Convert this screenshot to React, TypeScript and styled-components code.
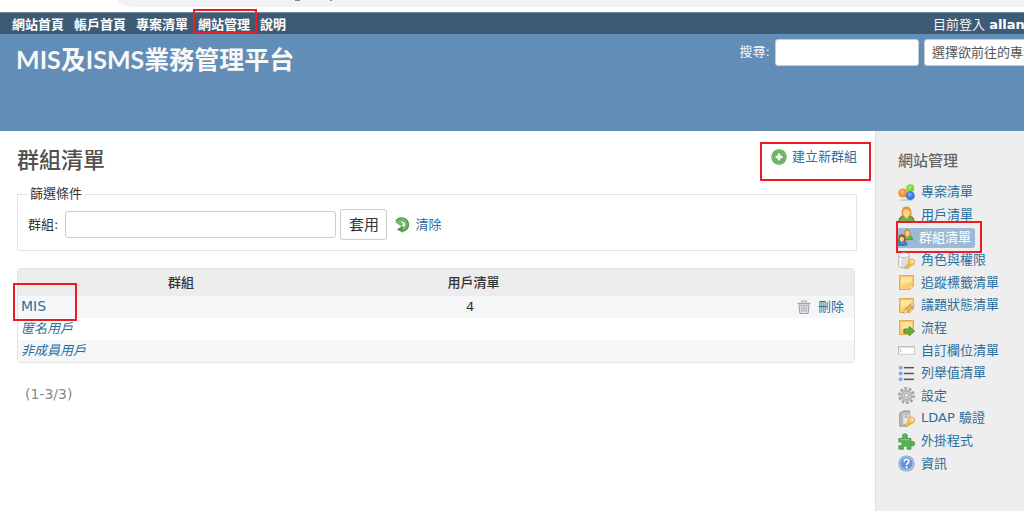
import React from 'react';
import styled, { createGlobalStyle, css } from 'styled-components';

const GlobalStyle = createGlobalStyle`
  * { box-sizing: border-box; }
  body {
    margin: 0;
    background: #fff;
    color: #333;
    font-family: "DejaVu Sans", "Noto Sans CJK TC", sans-serif;
    font-size: 13px;
    line-height: 20px;
  }
  a { color: #2a6f9f; text-decoration: none; }
`;

const Page = styled.div`
  display: flex;
  flex-direction: column;
  min-height: 100vh;
  overflow: hidden;
`;

const BrowserStrip = styled.div`
  height: 12px;
  padding-left: 118px;
  background: #fff;
`;

const AddressBar = styled.div`
  display: flex;
  gap: 30px;
  height: 7px;
  padding-left: 177px;
  border-bottom-left-radius: 16px 7px;
  background: #f1f3f4;
`;

const UrlTail = styled.span<{ $width: number }>`
  width: ${p => p.$width}px;
  height: 1px;
  background: #85888c;
`;

const Mark = styled.span<{ $inset: string }>`
  position: absolute;
  inset: ${p => p.$inset};
  border: 2px solid #ec1c24;
  pointer-events: none;
`;

const NameMark = styled(Mark)`
  width: 64px;
`;

const TopMenu = styled.nav`
  display: flex;
  justify-content: space-between;
  height: 22px;
  padding-left: 12px;
  border-top: 1px solid #748796;
  background: #3e5b76;
  color: #f4f6f8;
  line-height: 24px;
`;

const MenuList = styled.ul`
  display: flex;
  gap: 10px;
  margin: 0;
  padding: 0;
  list-style: none;
`;

const MenuItem = styled.li`
  position: relative;
  a { color: #fff; font-weight: 700; }
`;

const LoggedAs = styled.div`
  flex: none;
  width: 91px;
  white-space: nowrap;
  a { color: #fff; font-weight: 700; }
`;

const Header = styled.header`
  display: flex;
  justify-content: space-between;
  height: 97px;
  padding: 5px 0 0 16px;
  background: #628db6;
  color: #f8f8f8;
`;

const SiteTitle = styled.h1`
  margin: 0;
  font-family: Lato, "Noto Sans CJK TC", sans-serif;
  font-size: 25px;
  font-weight: 700;
  line-height: 40px;
`;

const QuickSearch = styled.form`
  display: flex;
  flex: none;
  gap: 5px;
  height: 27px;
  margin-right: -60px;
  line-height: 26px;
`;

const fieldBox = css`
  height: 27px;
  border: 1px solid #ccc;
  border-radius: 3px;
  background: #fff;
  color: #555;
  font: inherit;
`;

const TextField = styled.input<{ $width: number }>`
  ${fieldBox}
  width: ${p => p.$width}px;
  padding: 0 6px;
`;

const ProjectSelect = styled.select`
  ${fieldBox}
  width: 160px;
  padding: 0 7px;
  appearance: none;
`;

const Main = styled.div`
  display: flex;
  flex: 1;
`;

const Content = styled.main`
  flex: 1;
  min-width: 0;
  padding: 12px 18px 20px 17px;
`;

const TitleRow = styled.div`
  display: flex;
  justify-content: space-between;
  align-items: flex-start;
`;

const PageTitle = styled.h2`
  margin: 0;
  color: #505050;
  font-size: 22px;
  font-weight: 500;
  line-height: 36px;
`;

const IconLink = styled.a<{ $gap?: number }>`
  display: inline-flex;
  align-items: center;
  gap: ${p => p.$gap ?? 5}px;
  line-height: 20px;
  vertical-align: top;
  svg { flex: none; }
`;

const Contextual = styled.div`
  position: relative;
  padding-top: 4px;
`;

const Filters = styled.fieldset`
  min-width: 0;
  margin: 5px 0 17px;
  padding: 5px 10px 10px;
  border: 1px solid #e4e4e4;
`;

const Legend = styled.legend`
  padding: 0 2px;
`;

const FilterRow = styled.div`
  display: flex;
  align-items: center;
  gap: 4px;
  label { margin-right: 3px; }
`;

const ApplyButton = styled.button`
  width: 47px;
  height: 31px;
  padding: 0;
  border: 1px solid #ccc;
  border-radius: 3px;
  background: #fff;
  color: #333;
  font: inherit;
  font-size: 15px;
`;

const ClearLink = styled(IconLink)`
  margin-left: 3px;
`;

const TableFrame = styled.div`
  margin-right: 2px;
  border: 1px solid #e4e4e4;
  border-radius: 3px;
`;

const GroupTable = styled.table`
  width: 100%;
  border-collapse: collapse;
  table-layout: fixed;
`;

const HeadCell = styled.th<{ $share: number }>`
  width: ${p => p.$share}%;
  height: 27px;
  padding: 0;
  background: #ececec;
  font-weight: 500;
`;

const Row = styled.tr`
  &:nth-child(odd) { background: #f5f6f8; }
`;

const Cell = styled.td<{ $align?: string }>`
  position: relative;
  height: 22px;
  padding: 0 10px 0 3px;
  line-height: 20px;
  text-align: ${p => p.$align ?? 'left'};
`;

const NameLink = styled.a<{ $builtin?: boolean }>`
  font-size: ${p => (p.$builtin ? 13 : 14)}px;
  font-style: ${p => (p.$builtin ? 'italic' : 'normal')};
  line-height: 16px;
`;

const Pagination = styled.p`
  margin: 21px 8px 0;
  color: #888;
  font-size: 14px;
`;

const Sidebar = styled.aside`
  flex: none;
  width: 149px;
  padding: 18px 0 20px 22px;
  border-left: 1px solid #ddd;
  background: #eee;
`;

const SideTitle = styled.h3`
  margin: 0 0 8px;
  color: #666;
  font-size: 15px;
  font-weight: 500;
  line-height: 24px;
`;

const SideList = styled.ul`
  display: flex;
  flex-direction: column;
  height: 294px;
  margin: 0;
  padding: 0;
  list-style: none;
`;

const SideItem = styled.li`
  position: relative;
  display: flex;
  flex: 1;
  align-items: center;
  white-space: nowrap;
`;

const SideLink = styled(IconLink)<{ $selected?: boolean }>`
  gap: 6px;
  svg { width: 17px; height: 17px; }
  ${p => p.$selected && css`
    margin-left: -2px;
    padding-right: 4px;
    border-radius: 3px;
    background: #9db9d5;
    color: #fff;
  `}
`;

const Svg = ({ children, size = 16 }: { children: React.ReactNode; size?: number }) => (
  <svg width={size} height={size} viewBox="0 0 16 16" aria-hidden="true">{children}</svg>
);

const AddIcon = () => (
  <Svg>
    <circle cx="8" cy="8" r="7.700" fill="#4c9a48" />
    <circle cx="8" cy="8" r="6.600" fill="#69b35f" stroke="#94c98b" strokeWidth=".8" />
    <path d="M8 4.500v7M4.500 8h7" stroke="#fff" strokeWidth="2.400" />
  </Svg>
);

const ReloadIcon = () => (
  <Svg>
    <path d="M3 4.800C5.500 1.500 10 1.700 12 4.200c2.500 3.300.7 7.800-3.500 8.600" fill="none" stroke="#4f9b4b" strokeWidth="4" />
    <path d="M9 8.500v7.300L2.800 12.600z" fill="#4f9b4b" />
    <path d="M3.300 5.200C5.500 2.200 9.500 2.200 11.500 4.500c2.200 2.900.6 7-3.200 7.700" fill="none" stroke="#74b96c" strokeWidth="2.600" />
    <path d="M1 5.200l3.200-2 5.300 3.600L7.500 9.500z" fill="#74b96c" />
  </Svg>
);

const TrashIcon = () => (
  <Svg size={14}>
    <path d="M5.500 3V1.200h5V3" fill="none" stroke="#a3a3a8" strokeWidth="1.200" />
    <path d="M.8 3.200h14.400v1.600H.8z" fill="#a3a3a8" />
    <path d="M2.300 6h11.400l-.8 8.200q-.1 1.200-1.300 1.200H4.400q-1.200 0-1.300-1.200z" fill="#e4e4e8" stroke="#a3a3a8" strokeWidth="1.300" />
    <path d="M5.500 7.500v6M8 7.500v6M10.500 7.500v6" stroke="#a3a3a8" strokeWidth="1.200" />
  </Svg>
);

const ProjectsIcon = () => (
  <Svg>
    <ellipse cx="8" cy="15" rx="7" ry="1" fill="#cfcfcf" />
    <circle cx="11.500" cy="4" r="3.800" fill="#7fd43c" />
    <circle cx="10.900" cy="3.400" r="2" fill="#a3e665" />
    <circle cx="4.500" cy="8.500" r="4.300" fill="#f0932f" />
    <circle cx="4" cy="7.600" r="2.300" fill="#fbae5c" />
    <circle cx="11.600" cy="11" r="4.200" fill="#3c7be0" />
    <circle cx="11" cy="10" r="2" fill="#6ea3f2" />
  </Svg>
);

const Person = ({ shirt, edge, hair }: { shirt: string; edge: string; hair: string }) => (
  <>
    <path d="M.8 14.800C.8 10.800 2.800 9.300 8 9.300s7.200 1.500 7.200 5.500q-7.200 1.700-14.400 0z" fill={shirt} stroke={edge} />
    <path d="M5.500 9.300L8 11.500l2.500-2.200z" fill="#ffe3bd" />
    <path d="M3.400 9.500C3 3 4.300.4 8 .4s5 2.600 4.600 9.100l-2 .3H5.400z" fill={hair} />
    <ellipse cx="8" cy="6.500" rx="3.100" ry="3.500" fill="#ffd08a" />
  </>
);

const UserIcon = () => (
  <Svg><Person shirt="#6fb14f" edge="#458b31" hair="#e39a2c" /></Svg>
);

const GroupIcon = () => (
  <Svg>
    <g transform="translate(5.500 0) scale(.66)"><Person shirt="#6fb14f" edge="#458b31" hair="#d98b26" /></g>
    <g transform="translate(0 5) scale(.68)"><Person shirt="#4384cf" edge="#2860a5" hair="#8d4f2d" /></g>
  </Svg>
);

const Key = () => (
  <>
    <path d="M10.800 9.600L6.800 13.600v1.900h2.500v-1.200h1.800l1.900-2z" fill="#f4bb45" stroke="#cd9430" strokeWidth=".5" />
    <circle cx="12.600" cy="9.600" r="3.100" fill="#f8c95c" stroke="#cd9430" strokeWidth=".5" />
    <circle cx="13.400" cy="8.800" r=".9" fill="#fff" />
  </>
);

const RolesIcon = () => (
  <Svg>
    <path d="M.6 3v9.800c0 3 10 3 10 0V3z" fill="#dedede" stroke="#aaa" strokeWidth=".7" />
    <path d="M2.200 4.500v9" stroke="#fff" strokeWidth="1.500" />
    <ellipse cx="5.600" cy="3" rx="5" ry="2.200" fill="#f6f6f6" stroke="#b0b0b0" strokeWidth=".7" />
    <Key />
  </Svg>
);

const Note = () => (
  <>
    <path d="M1.500 1.500h13v9.500L11 14.500H1.500z" fill="#fbcf70" stroke="#e8a850" />
    <path d="M3 3h10v4L3 10z" fill="#fde6a0" />
    <path d="M14.500 11H11v3.500z" fill="#fff5cc" stroke="#e8a850" strokeWidth=".7" />
  </>
);

const TrackerIcon = () => <Svg><Note /></Svg>;

const StatusIcon = () => (
  <Svg>
    <Note />
    <path d="M5.500 15.300l1-3.500L13 5.500l2.500 2.300-6.500 6.500z" fill="#f4b450" stroke="#b0793b" strokeWidth=".7" />
    <path d="M5.500 15.300l1-3.500 2.500 2.500z" fill="#f6dfbf" />
    <path d="M12 6.400l1.300-1.200 2.300 2.300-1.300 1.200z" fill="#d3cdd0" />
  </Svg>
);

const WorkflowIcon = () => (
  <Svg>
    <Note />
    <path d="M5.500 9.500h5V7l5.200 4.500-5.200 4.300v-2.500h-5z" fill="#5fb145" stroke="#3f933a" strokeWidth=".8" />
  </Svg>
);

const FieldIcon = () => (
  <Svg>
    <path d="M.5 4.500h15v7H.5z" fill="#fff" stroke="#ccc" />
    <path d="M.5 11.500v-7h15" fill="none" stroke="#b5b5b5" />
    <path d="M2.500 6.500v3" stroke="#aaa" strokeWidth=".8" />
  </Svg>
);

const ListIcon = () => (
  <Svg>
    {[2.5, 8, 13.5].map(y => (
      <g key={y}>
        <circle cx="2.500" cy={y} r="1.900" fill="#83acf0" />
        <path d={`M5.500 ${y}h9.500`} stroke="#555" strokeWidth="1.400" />
      </g>
    ))}
  </Svg>
);

const GearIcon = () => (
  <Svg>
    <circle cx="8" cy="8" r="6.700" fill="none" stroke="#a3a3a3" strokeWidth="2.600" strokeDasharray="2.500 1.700" />
    <circle cx="8" cy="8" r="5.800" fill="#bcbcbc" />
    <circle cx="8" cy="8" r="4" fill="#cfcfcf" stroke="#a9a9a9" strokeWidth=".8" />
    <circle cx="8" cy="8" r="1.900" fill="#f0f0f0" stroke="#999" strokeWidth=".8" />
  </Svg>
);

const ServerIcon = () => (
  <Svg>
    <path d="M1.500 3L5 .8h6v12L8 15.200H1.500z" fill="#b9b9b9" stroke="#969696" strokeWidth=".8" />
    <path d="M4.500 2.800H11v11H4.500z" fill="#e4e4e4" stroke="#a9a9a9" strokeWidth=".6" />
    <path d="M6 4.500h3.500M6 6.500h3.500" stroke="#999" />
    <Key />
  </Svg>
);

const PluginIcon = () => (
  <Svg>
    <path d="M.8 5.200H5C3.300 2.700 4.300.8 6.400.8S9.600 2.700 8.200 5.200h4v3.300c2.200-1.300 3.500-.3 3.500 1.500s-1.500 2.900-3.500 1.500v3.700H8.400c1.100-2-.1-2.900-1.500-2.900s-2.600.9-1.500 2.900H.8v-3.500c2 1 2.900-.1 2.900-1.600S2.800 7.500.8 8.600z" fill="#58b154" stroke="#419541" strokeWidth=".8" />
    <path d="M2 6.300h9M5.300 3q.2-1 1.300-1" fill="none" stroke="#91d389" strokeWidth=".9" />
  </Svg>
);

const InfoIcon = () => (
  <Svg>
    <circle cx="8" cy="8" r="7.600" fill="#7d9fce" />
    <circle cx="8" cy="8" r="6.300" fill="#6a94d0" stroke="#bcd0ec" />
    <path d="M5.800 6.300C5.900 3.200 10.300 3.400 10.200 6c0 1.700-2.100 1.700-2.100 3.500" fill="none" stroke="#fff" strokeWidth="1.500" />
    <circle cx="8.100" cy="11.700" r="1" fill="#fff" />
  </Svg>
);

const menu = ['網站首頁', '帳戶首頁', '專案清單', '網站管理', '說明'];

const adminLinks: { label: string; Icon: () => React.ReactElement; selected?: boolean }[] = [
  { label: '專案清單', Icon: ProjectsIcon },
  { label: '用戶清單', Icon: UserIcon },
  { label: '群組清單', Icon: GroupIcon, selected: true },
  { label: '角色與權限', Icon: RolesIcon },
  { label: '追蹤標籤清單', Icon: TrackerIcon },
  { label: '議題狀態清單', Icon: StatusIcon },
  { label: '流程', Icon: WorkflowIcon },
  { label: '自訂欄位清單', Icon: FieldIcon },
  { label: '列舉值清單', Icon: ListIcon },
  { label: '設定', Icon: GearIcon },
  { label: 'LDAP 驗證', Icon: ServerIcon },
  { label: '外掛程式', Icon: PluginIcon },
  { label: '資訊', Icon: InfoIcon },
];

const groups = [
  { name: 'MIS', users: 4, builtin: false },
  { name: '匿名用戶', builtin: true },
  { name: '非成員用戶', builtin: true },
];

export default function App() {
  return (
    <Page>
      <GlobalStyle />
      <BrowserStrip>
        <AddressBar><UrlTail $width={5} /><UrlTail $width={2} /></AddressBar>
      </BrowserStrip>
      <TopMenu>
        <MenuList>
          {menu.map(label => (
            <MenuItem key={label}>
              <a href="#">{label}</a>
              {label === '網站管理' && <Mark $inset="-4px -7px 0 -5px" />}
            </MenuItem>
          ))}
        </MenuList>
        <LoggedAs>目前登入 <a href="#">allan</a></LoggedAs>
      </TopMenu>
      <Header>
        <SiteTitle>MIS及ISMS業務管理平台</SiteTitle>
        <QuickSearch>
          <label htmlFor="q">搜尋:</label>
          <TextField id="q" $width={144} />
          <ProjectSelect aria-label="專案">
            <option>選擇欲前往的專案...</option>
          </ProjectSelect>
        </QuickSearch>
      </Header>
      <Main>
        <Content>
          <TitleRow>
            <PageTitle>群組清單</PageTitle>
            <Contextual>
              <IconLink href="#"><AddIcon />建立新群組</IconLink>
              <Mark $inset="-1px -14px -14px -11px" />
            </Contextual>
          </TitleRow>
          <Filters>
            <Legend>篩選條件</Legend>
            <FilterRow>
              <label htmlFor="name">群組:</label>
              <TextField id="name" $width={271} />
              <ApplyButton type="button">套用</ApplyButton>
              <ClearLink href="#"><ReloadIcon />清除</ClearLink>
            </FilterRow>
          </Filters>
          <TableFrame>
            <GroupTable>
              <thead>
                <tr>
                  <HeadCell $share={39}>群組</HeadCell>
                  <HeadCell $share={31}>用戶清單</HeadCell>
                  <HeadCell $share={30} aria-label="操作" />
                </tr>
              </thead>
              <tbody>
                {groups.map(g => (
                  <Row key={g.name}>
                    <Cell>
                      <NameLink href="#" $builtin={g.builtin}>{g.name}</NameLink>
                      {!g.builtin && <NameMark $inset="-13px auto -3px -5px" />}
                    </Cell>
                    <Cell $align="center">{g.users}</Cell>
                    <Cell $align="right">
                      {!g.builtin && <IconLink href="#" $gap={7}><TrashIcon />刪除</IconLink>}
                    </Cell>
                  </Row>
                ))}
              </tbody>
            </GroupTable>
          </TableFrame>
          <Pagination>(1-3/3)</Pagination>
        </Content>
        <Sidebar>
          <SideTitle>網站管理</SideTitle>
          <SideList>
            {adminLinks.map(({ label, Icon, selected }) => (
              <SideItem key={label}>
                <SideLink href="#" $selected={selected}><Icon />{label}</SideLink>
                {selected && <Mark $inset="-5px 42px -4px -2px" />}
              </SideItem>
            ))}
          </SideList>
        </Sidebar>
      </Main>
    </Page>
  );
}
